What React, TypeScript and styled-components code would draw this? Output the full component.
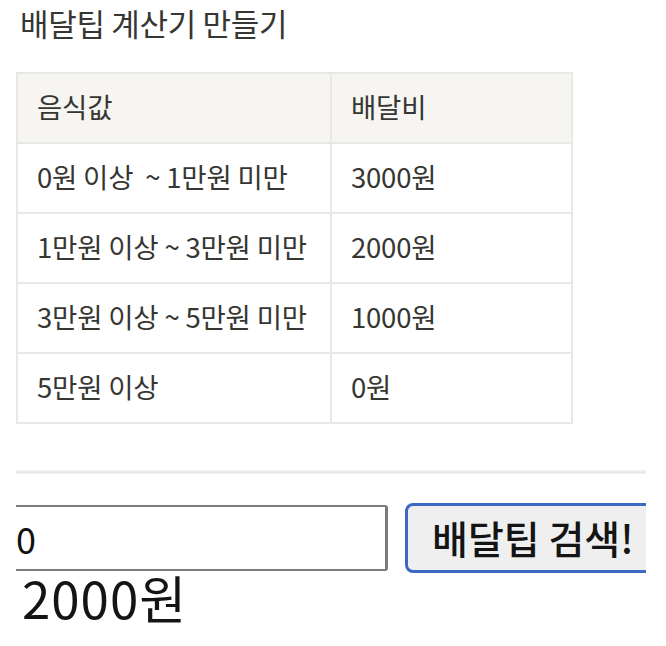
import React, { useState } from "react";
import styled, { createGlobalStyle } from "styled-components";

const GlobalStyle = createGlobalStyle`
    body {
        margin: 0;
        background: #ffffff;
        font-family: "Noto Sans CJK KR", "Noto Sans", sans-serif;
        color: #333330;
    }
`

const Page = styled.div`
    width: 666px;
    height: 646px;
    overflow: hidden;
    padding: 0 0 0 16px;
    box-sizing: border-box;
`

const Title = styled.h1`
    margin: 0;
    padding: 4px 0 0 4px;
    height: 72px;
    box-sizing: border-box;
    font-size: 31px;
    font-weight: 400;
    line-height: 38px;
    color: #363632;
    letter-spacing: -0.3px;
`

const TipTable = styled.table`
    border-collapse: collapse;
    table-layout: fixed;
    width: 555px;
    border: 2px solid #e8e8e6;
`

const Row = styled.tr<{ $head?: boolean }>`
    height: 70px;
    background: ${p => p.$head ? "#f6f5f2" : "#ffffff"};
`

const Cell = styled.td<{ $w: number }>`
    border: 2px solid #e8e8e6;
    padding: 0 0 4px 19px;
    width: ${p => p.$w}px;
    font-size: 27.5px;
    color: #363632;
    letter-spacing: -0.2px;
    white-space: pre;
`

const Divider = styled.div`
    margin-top: 46px;
    width: 630px;
    height: 4px;
    background: linear-gradient(#f6f6f6, #e6e6e6 60%, #f4f4f4);
`

const SearchBar = styled.form`
    margin-top: 28px;
    width: 630px;
    height: 72px;
    display: flex;
    align-items: center;
    gap: 17px;
    overflow: hidden;
`

const PriceInput = styled.input`
    width: 372px;
    height: 66px;
    box-sizing: border-box;
    border: 2px solid #7c7c7c;
    border-left: none;
    border-right-width: 3px;
    border-radius: 0 3px 3px 0;
    padding: 0;
    font-family: "Noto Sans CJK KR", sans-serif;
    font-size: 36px;
    color: #111111;
    outline: none;
    flex-shrink: 0;
`

const SearchButton = styled.button`
    width: 262px;
    height: 70px;
    box-sizing: border-box;
    flex-shrink: 0;
    border: 3px solid #3d68c4;
    border-radius: 8px;
    background: #efefef;
    padding: 0 0 2px 24px;
    text-align: left;
    font-family: "Noto Sans CJK KR", sans-serif;
    font-size: 39px;
    font-weight: 500;
    color: #141414;
    white-space: nowrap;
`

const Result = styled.div`
    margin: -6px 0 0 6px;
    font-size: 51px;
    line-height: 58px;
    letter-spacing: 1px;
    color: #141414;
`

const tips = [
    { range: "0원 이상  ~ 1만원 미만", fee: "3000원" },
    { range: "1만원 이상 ~ 3만원 미만", fee: "2000원" },
    { range: "3만원 이상 ~ 5만원 미만", fee: "1000원" },
    { range: "5만원 이상", fee: "0원" },
]

const App = () => {
    const [price, setPrice] = useState<string>("20000");

    return (
        <Page>
            <GlobalStyle />
            <Title>배달팁 계산기 만들기</Title>
            <TipTable>
                <tbody>
                    <Row $head>
                        <Cell $w={293}>음식값</Cell>
                        <Cell $w={220}>배달비</Cell>
                    </Row>
                    {tips.map(t => (
                        <Row key={t.range}>
                            <Cell $w={293}>{t.range}</Cell>
                            <Cell $w={220}>{t.fee}</Cell>
                        </Row>
                    ))}
                </tbody>
            </TipTable>
            <Divider />
            <SearchBar onSubmit={e => e.preventDefault()}>
                <PriceInput type="text" value={price.slice(-1)} onChange={e => setPrice(e.target.value)} />
                <SearchButton type="submit">배달팁 검색!</SearchButton>
            </SearchBar>
            <Result>2000원</Result>
        </Page>
    )
}

export default App;
